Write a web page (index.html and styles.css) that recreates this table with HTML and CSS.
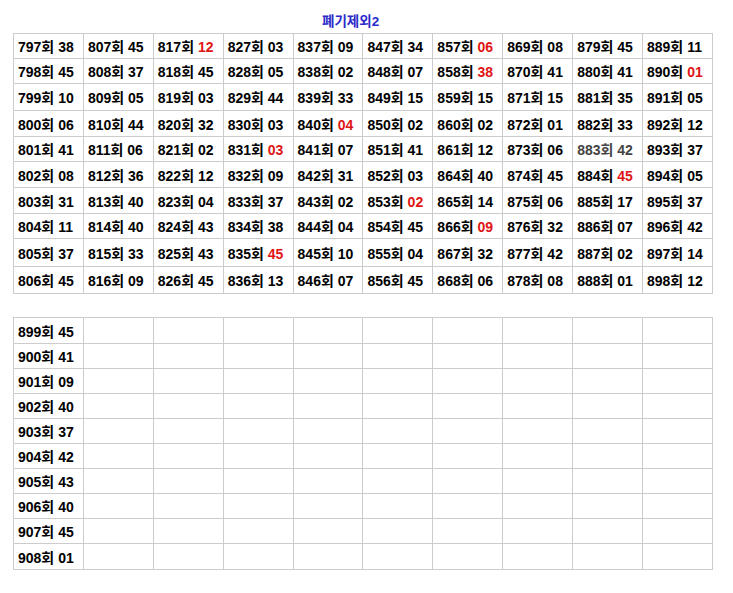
FILE: index.html
```html
<!DOCTYPE html>
<html lang="ko">
<head>
<meta charset="utf-8">
<title>폐기제외2</title>
<link rel="stylesheet" href="styles.css">
</head>
<body>
<div class="page">
  <div class="title">폐기제외2</div>
  <table class="grid top">
    <tr class="h25">
      <td>797회 38</td><td>807회 45</td><td>817회 <span class="r">12</span></td><td>827회 03</td><td>837회 09</td><td>847회 34</td><td>857회 <span class="r">06</span></td><td>869회 08</td><td>879회 45</td><td>889회 11</td>
    </tr>
    <tr class="h25">
      <td>798회 45</td><td>808회 37</td><td>818회 45</td><td>828회 05</td><td>838회 02</td><td>848회 07</td><td>858회 <span class="r">38</span></td><td>870회 41</td><td>880회 41</td><td>890회 <span class="r">01</span></td>
    </tr>
    <tr class="h27">
      <td>799회 10</td><td>809회 05</td><td>819회 03</td><td>829회 44</td><td>839회 33</td><td>849회 15</td><td>859회 15</td><td>871회 15</td><td>881회 35</td><td>891회 05</td>
    </tr>
    <tr class="h26">
      <td>800회 06</td><td>810회 44</td><td>820회 32</td><td>830회 03</td><td>840회 <span class="r">04</span></td><td>850회 02</td><td>860회 02</td><td>872회 01</td><td>882회 33</td><td>892회 12</td>
    </tr>
    <tr class="h25">
      <td>801회 41</td><td>811회 06</td><td>821회 02</td><td>831회 <span class="r">03</span></td><td>841회 07</td><td>851회 41</td><td>861회 12</td><td>873회 06</td><td class="g">883회 42</td><td>893회 37</td>
    </tr>
    <tr class="h26">
      <td>802회 08</td><td>812회 36</td><td>822회 12</td><td>832회 09</td><td>842회 31</td><td>852회 03</td><td>864회 40</td><td>874회 45</td><td>884회 <span class="r">45</span></td><td>894회 05</td>
    </tr>
    <tr class="h26">
      <td>803회 31</td><td>813회 40</td><td>823회 04</td><td>833회 37</td><td>843회 02</td><td>853회 <span class="r">02</span></td><td>865회 14</td><td>875회 06</td><td>885회 17</td><td>895회 37</td>
    </tr>
    <tr class="h25">
      <td>804회 11</td><td>814회 40</td><td>824회 43</td><td>834회 38</td><td>844회 04</td><td>854회 45</td><td>866회 <span class="r">09</span></td><td>876회 32</td><td>886회 07</td><td>896회 42</td>
    </tr>
    <tr class="h28">
      <td>805회 37</td><td>815회 33</td><td>825회 43</td><td>835회 <span class="r">45</span></td><td>845회 10</td><td>855회 04</td><td>867회 32</td><td>877회 42</td><td>887회 02</td><td>897회 14</td>
    </tr>
    <tr class="h27">
      <td>806회 45</td><td>816회 09</td><td>826회 45</td><td>836회 13</td><td>846회 07</td><td>856회 45</td><td>868회 06</td><td>878회 08</td><td>888회 01</td><td>898회 12</td>
    </tr>
  </table>

  <table class="grid bottom">
    <tr class="h26"><td class="first">899회 45</td><td></td><td></td><td></td><td></td><td></td><td></td><td></td><td></td><td></td></tr>
    <tr class="h25"><td class="first">900회 41</td><td></td><td></td><td></td><td></td><td></td><td></td><td></td><td></td><td></td></tr>
    <tr class="h25"><td class="first">901회 09</td><td></td><td></td><td></td><td></td><td></td><td></td><td></td><td></td><td></td></tr>
    <tr class="h25"><td class="first">902회 40</td><td></td><td></td><td></td><td></td><td></td><td></td><td></td><td></td><td></td></tr>
    <tr class="h25"><td class="first">903회 37</td><td></td><td></td><td></td><td></td><td></td><td></td><td></td><td></td><td></td></tr>
    <tr class="h25"><td class="first">904회 42</td><td></td><td></td><td></td><td></td><td></td><td></td><td></td><td></td><td></td></tr>
    <tr class="h25"><td class="first">905회 43</td><td></td><td></td><td></td><td></td><td></td><td></td><td></td><td></td><td></td></tr>
    <tr class="h25"><td class="first">906회 40</td><td></td><td></td><td></td><td></td><td></td><td></td><td></td><td></td><td></td></tr>
    <tr class="h25"><td class="first">907회 45</td><td></td><td></td><td></td><td></td><td></td><td></td><td></td><td></td><td></td></tr>
    <tr class="h26"><td class="first">908회 01</td><td></td><td></td><td></td><td></td><td></td><td></td><td></td><td></td><td></td></tr>
  </table>
</div>
</body>
</html>
```

FILE: styles.css
```css
html, body {
  margin: 0;
  padding: 0;
  background: #ffffff;
}

.page {
  padding: 0 0 0 13px;
  font-family: "Liberation Sans", "Noto Sans CJK KR", Arial, sans-serif;
  font-weight: bold;
  font-size: 14px;
  color: #000000;
}

.title {
  height: 33px;
  box-sizing: border-box;
  padding: 13px 0 0 309px;
  line-height: 17px;
  color: #2a2ac8;
  font-size: 13.5px;
}

.grid {
  width: 700px;
  table-layout: fixed;
  border-collapse: separate;
  border-spacing: 0;
  border-top: 1px solid #cccccc;
  border-left: 1px solid #cccccc;
}

.grid td {
  border-right: 1px solid #cccccc;
  border-bottom: 1px solid #cccccc;
  padding: 2px 0 0 4px;
  white-space: nowrap;
  overflow: hidden;
  vertical-align: middle;
  line-height: 14px;
}

.bottom {
  margin-top: 23px;
}

.h25 { height: 25px; }
.h26 { height: 26px; }
.h27 { height: 27px; }
.h28 { height: 28px; }

.r { color: #e01515; }
.g { color: #444444; }
```
